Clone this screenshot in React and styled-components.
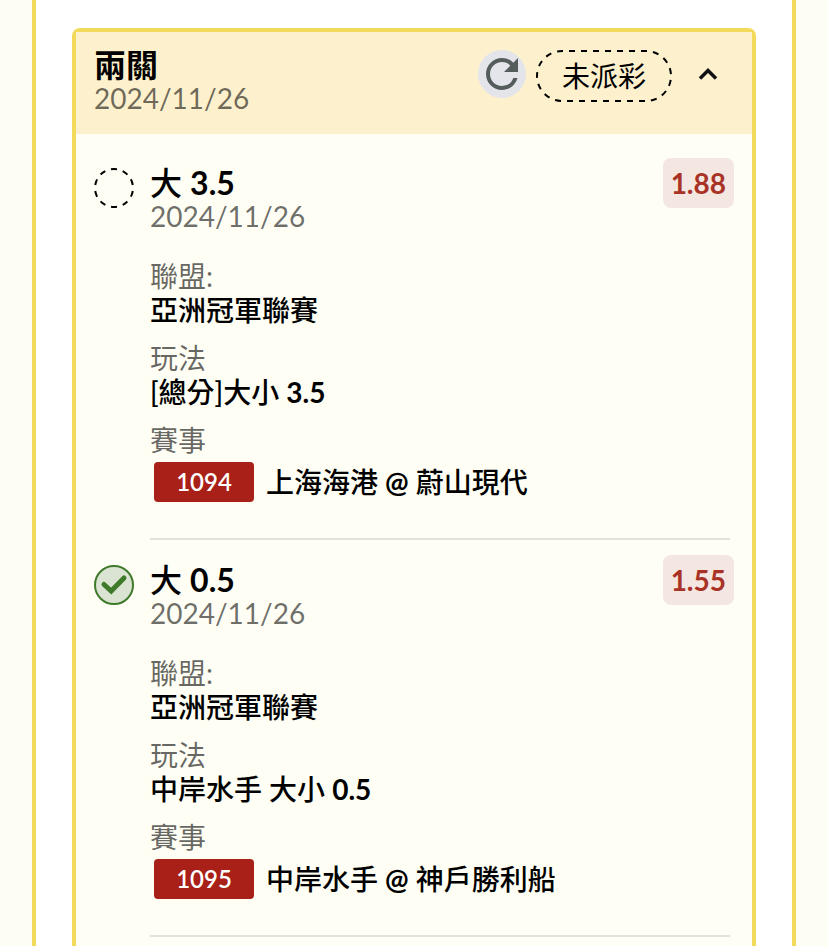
import React, { useState } from "react";
import styled, { createGlobalStyle } from "styled-components";
import { MdRefresh } from "react-icons/md";

const bets = [
  {
    id: "1094",
    title: "大 3.5",
    date: "2024/11/26",
    odds: "1.88",
    won: false,
    league: "亞洲冠軍聯賽",
    play: "[總分]大小 3.5",
    match: "上海海港 @ 蔚山現代",
  },
  {
    id: "1095",
    title: "大 0.5",
    date: "2024/11/26",
    odds: "1.55",
    won: true,
    league: "亞洲冠軍聯賽",
    play: "中岸水手 大小 0.5",
    match: "中岸水手 @ 神戶勝利船",
  },
];

// numbers and @ are bold, the chinese text is medium
function Mixed({ text }) {
  return (
    <span>
      {text
        .split(/([\d.@]+)/)
        .map((part, i) => (i % 2 ? <Strong key={i}>{part}</Strong> : part))}
    </span>
  );
}

function StatusIcon({ won }) {
  return (
    <StatusSvg viewBox="0 0 40 40" aria-hidden="true">
      {won ? (
        <>
          <circle cx="20" cy="20" r="19" fill="#dbe4d2" stroke="#3f7a2b" strokeWidth="2" />
          <path
            d="M10 19.5L17.2 26L30 13"
            fill="none"
            stroke="#3f7a2b"
            strokeWidth="5"
            strokeLinecap="round"
          />
        </>
      ) : (
        <circle
          cx="20"
          cy="20"
          r="19"
          fill="none"
          stroke="#000"
          strokeWidth="2"
          pathLength="100"
          strokeDasharray="5 5"
          strokeDashoffset="-2.5"
          transform="rotate(-36 20 20)"
        />
      )}
    </StatusSvg>
  );
}

function Bet({ bet }) {
  return (
    <Item>
      <StatusIcon won={bet.won} />
      <Content>
        <ItemTop>
          <Heading $inItem>
            <ItemTitle>
              <Mixed text={bet.title} />
            </ItemTitle>
            <DateText>{bet.date}</DateText>
          </Heading>
          <Odds>{bet.odds}</Odds>
        </ItemTop>
        <Details>
          <Field>
            <Label>聯盟:</Label>
            <Value>{bet.league}</Value>
          </Field>
          <Field>
            <Label>玩法</Label>
            <Value>
              <Mixed text={bet.play} />
            </Value>
          </Field>
          <Field>
            <Label>賽事</Label>
            <Match>
              <Code>{bet.id}</Code>
              <Mixed text={bet.match} />
            </Match>
          </Field>
        </Details>
      </Content>
    </Item>
  );
}

function App() {
  const [open, setOpen] = useState(true);

  return (
    <>
      <GlobalStyle />
      <Frame>
        <Card>
          <Header>
            <Heading>
              <Title>兩關</Title>
              <DateText>2024/11/26</DateText>
            </Heading>
            <Actions>
              <RefreshButton aria-label="重新整理">
                <MdRefresh size={48} />
              </RefreshButton>
              <Pill>
                未派彩
                <PillOutline viewBox="0 0 136 52" aria-hidden="true">
                  <rect x="1" y="1" width="134" height="50" rx="25" pathLength="324" />
                </PillOutline>
              </Pill>
              <ToggleButton
                aria-label="收合"
                aria-expanded={open}
                onClick={() => setOpen(!open)}
              >
                <Chevron $open={open} viewBox="0 0 24 24" aria-hidden="true">
                  <path d="M4 16.5L12 8.5L20 16.5" />
                </Chevron>
              </ToggleButton>
            </Actions>
          </Header>
          {open && (
            <List>
              {bets.map((bet) => (
                <Bet key={bet.id} bet={bet} />
              ))}
            </List>
          )}
        </Card>
      </Frame>
    </>
  );
}

export default App;

const GlobalStyle = createGlobalStyle`
  * {
    box-sizing: border-box;
  }
  body {
    margin: 0;
    background-color: #fefdf4;
    color: #000;
    font-family: Lato, "Noto Sans CJK TC", sans-serif;
    font-size: 28px;
    line-height: 32px;
  }
  h2, h3, p, ul, dl, dd {
    margin: 0;
    padding: 0;
  }
  button {
    padding: 0;
    border: none;
    background-color: transparent;
    cursor: pointer;
  }
`;
const Frame = styled.main`
  display: flex;
  flex-direction: column;
  min-height: 100vh;
  margin: 0 32px;
  padding: 28px 36px 0;
  border: solid #f3da5b;
  border-width: 0 4px;
  background-color: #fff;
`;
const Card = styled.section`
  flex: 1;
  border: 4px solid #f3da5b;
  border-bottom: none;
  border-radius: 8px 8px 0 0;
  background-color: #fefef4;
`;
const Header = styled.header`
  display: flex;
  justify-content: space-between;
  align-items: flex-start;
  padding: 16px 18px 20px;
  background-color: #fdf1cd;
`;
const Heading = styled.div`
  padding-top: ${(props) => (props.$inItem ? "8px" : "0")};
`;
const Title = styled.h2`
  font-size: 32px;
  line-height: 34px;
  font-weight: 700;
`;
const ItemTitle = styled.h3`
  font-size: 32px;
  line-height: 34px;
  font-weight: 500;
`;
const Strong = styled.b`
  font-weight: 700;
`;
const DateText = styled.p`
  color: rgba(0, 0, 0, 0.58);
`;
const Actions = styled.div`
  display: flex;
  align-items: flex-start;
  gap: 10px;
  padding-top: 2px;
`;
const RefreshButton = styled.button`
  width: 48px;
  height: 48px;
  border-radius: 50%;
  background-color: #e4e5ea;
  color: #555c5c;
  svg {
    display: block;
  }
`;
const Pill = styled.span`
  position: relative;
  padding: 10px 26px;
`;
const PillOutline = styled.svg`
  position: absolute;
  inset: 0;
  width: 100%;
  height: 100%;
  fill: none;
  stroke: #000;
  stroke-width: 2;
  stroke-dasharray: 6 6;
  stroke-dashoffset: -7;
`;
const ToggleButton = styled.button`
  display: flex;
  align-items: center;
  justify-content: center;
  width: 52px;
  height: 48px;
`;
const Chevron = styled.svg`
  width: 24px;
  height: 24px;
  fill: none;
  stroke: #111;
  stroke-width: 3.5;
  transform: ${(props) => (props.$open ? "none" : "rotate(180deg)")};
`;
const List = styled.ul`
  padding: 9px 18px 0;
  list-style: none;
`;
const Item = styled.li`
  display: flex;
  gap: 16px;
  padding-top: 15px;
`;
const StatusSvg = styled.svg`
  flex-shrink: 0;
  width: 40px;
  height: 40px;
  margin-top: 10px;
`;
const Content = styled.div`
  flex: 1;
`;
const ItemTop = styled.div`
  display: flex;
  justify-content: space-between;
  align-items: flex-start;
`;
const Odds = styled.span`
  padding: 9px 8px;
  border-radius: 8px;
  background-color: #f4e7e1;
  color: #a93226;
  font-weight: 700;
`;
const Details = styled.dl`
  display: flex;
  flex-direction: column;
  gap: 16px;
  margin-top: 28px;
  margin-right: 4px;
  padding-bottom: 36px;
  border-bottom: 2px solid #e2e2da;
`;
const Field = styled.div`
  display: flex;
  flex-direction: column;
  gap: 2px;
`;
const Label = styled.dt`
  color: rgba(0, 0, 0, 0.6);
`;
const Value = styled.dd`
  font-weight: 500;
`;
const Match = styled(Value)`
  display: flex;
  align-items: center;
  gap: 12px;
  padding: 4px 4px 0;
`;
const Code = styled.span`
  width: 100px;
  border-radius: 4px;
  background-color: #a82017;
  color: #fff;
  font-size: 24px;
  line-height: 40px;
  font-weight: 600;
  text-align: center;
`;
